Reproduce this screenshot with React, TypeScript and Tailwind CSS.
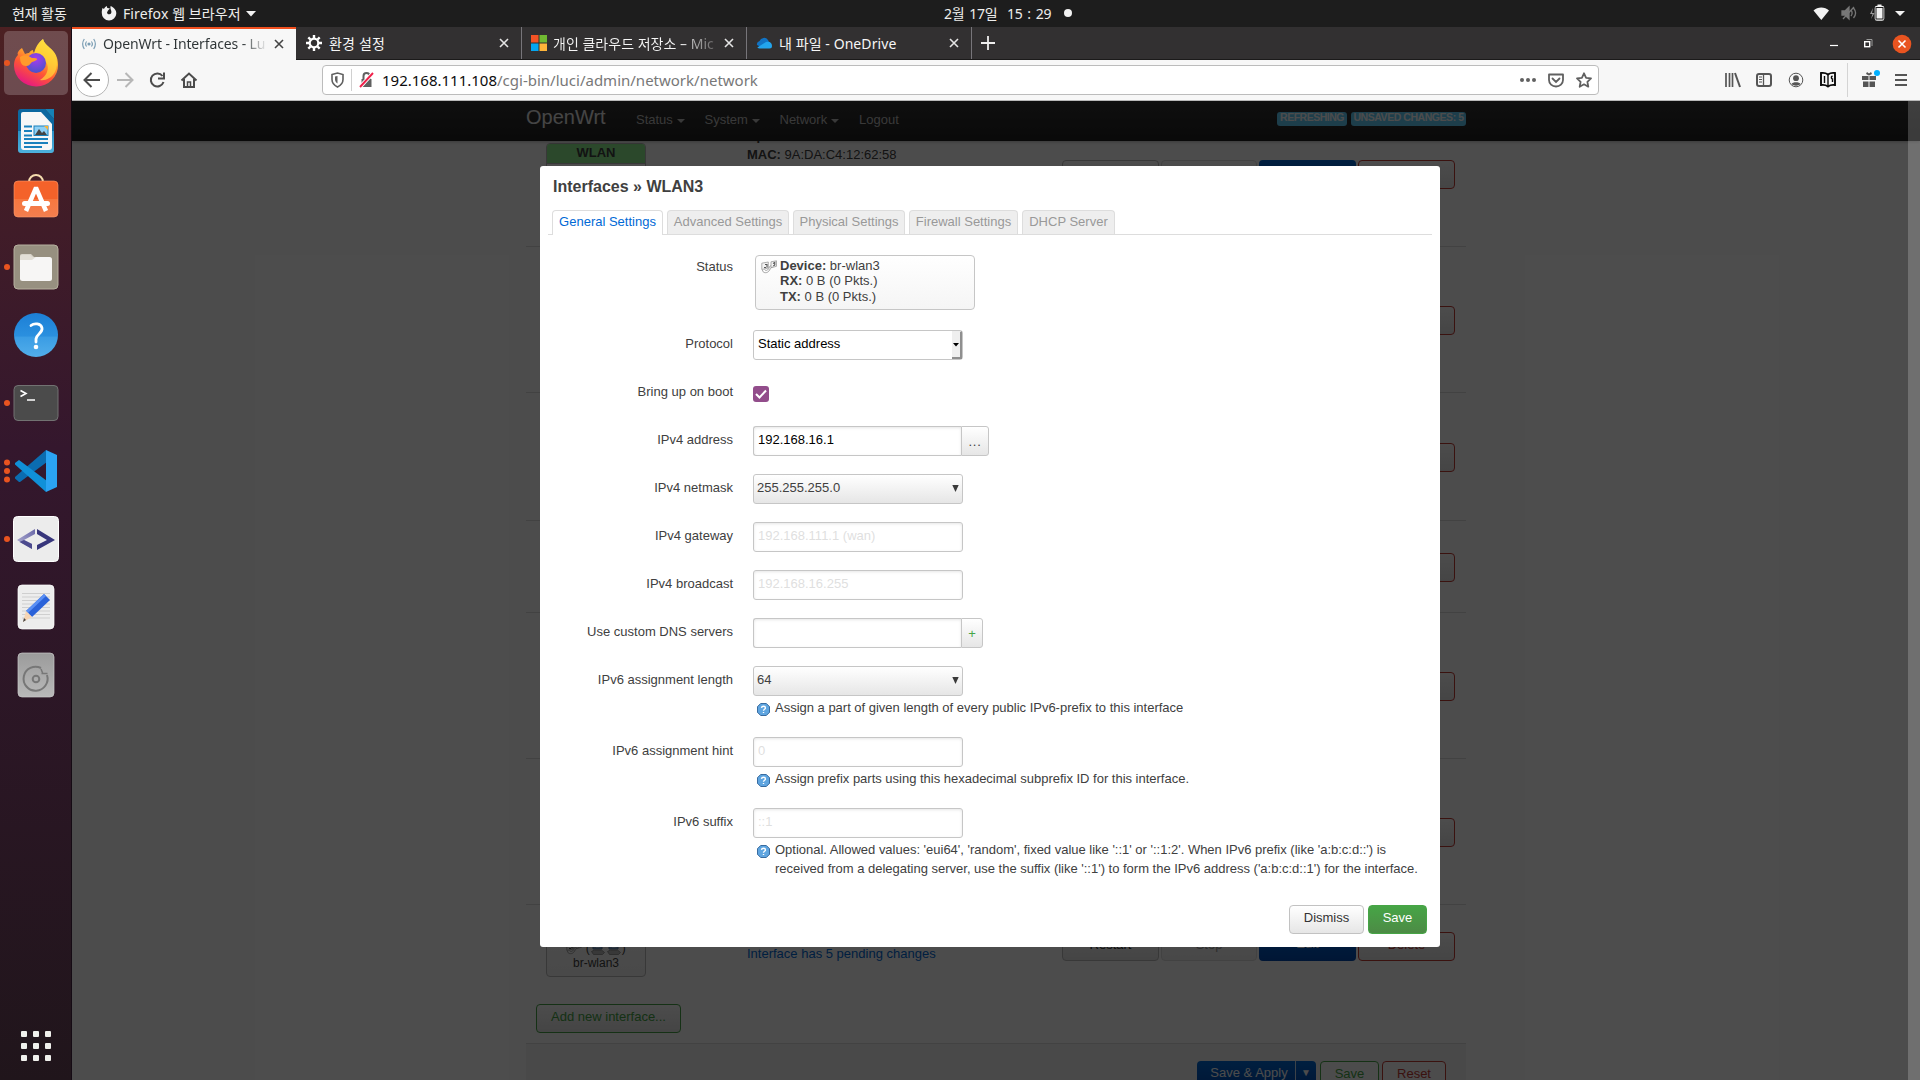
import React from "react";

const UI = "font-['Noto_Sans','Noto_Sans_CJK_KR',sans-serif]";

/* ---------- dock ---------- */

const DockCell = ({ children, dots = 0, active = false }: { children: React.ReactNode; dots?: number; active?: boolean }) => (
  <svg className="block h-[68px] w-[72px] shrink-0" viewBox="0 0 72 68">
    {active && <rect x="4" y="2" width="64" height="64" rx="5" fill="#fff" fillOpacity=".2" />}
    {dots === 1 && <circle cx="7" cy="34" r="3" fill="#e95420" />}
    {dots === 3 && [25.5, 34, 42.5].map((y) => <circle key={y} cx="7" cy={y} r="3" fill="#e95420" />)}
    {children}
  </svg>
);

const Dock = () => (
  <aside className="flex w-[72px] shrink-0 flex-col border-r border-[#150b14] bg-linear-to-b from-[#4c2022] via-[#34172d] via-40% to-[#20151b] pt-[2px]">
    <svg width="0" height="0" className="absolute">
      <defs>
        <linearGradient id="fx" x1=".8" y1="0" x2=".3" y2="1">
          <stop offset="0" stopColor="#fff44f" />
          <stop offset=".35" stopColor="#ffb32b" />
          <stop offset=".65" stopColor="#ff5634" />
          <stop offset="1" stopColor="#e31587" />
        </linearGradient>
        <radialGradient id="fxg" cx=".5" cy=".3" r=".7">
          <stop offset="0" stopColor="#a63bf0" />
          <stop offset="1" stopColor="#4a53c8" />
        </radialGradient>
        <linearGradient id="wr" x1="0" y1="0" x2="0" y2="1">
          <stop offset=".5" stopColor="#0c68a0" />
          <stop offset=".5" stopColor="#2b92c8" />
          <stop offset="1" stopColor="#4db1dd" />
        </linearGradient>
        <linearGradient id="sw" x1="0" y1="0" x2="0" y2="1">
          <stop offset=".5" stopColor="#f4622a" />
          <stop offset=".5" stopColor="#f6773f" />
          <stop offset="1" stopColor="#f37e4f" />
        </linearGradient>
        <linearGradient id="hp" x1="0" y1="0" x2="0" y2="1">
          <stop offset="0" stopColor="#1c7fd6" />
          <stop offset=".53" stopColor="#2b90df" />
          <stop offset=".54" stopColor="#3a9ce4" />
          <stop offset="1" stopColor="#52aeea" />
        </linearGradient>
        <linearGradient id="dk" x1="0" y1="0" x2="0" y2="1">
          <stop offset="0" stopColor="#9b9b9b" />
          <stop offset="1" stopColor="#b9b9b9" />
        </linearGradient>
        <linearGradient id="cd" x1="0" y1="1" x2="1" y2="0">
          <stop offset=".2" stopColor="#a5a4cc" />
          <stop offset="1" stopColor="#6967a8" />
        </linearGradient>
      </defs>
    </svg>

    <DockCell dots={1} active>
      <path d="M22 19l3 6c2-1 3-1 4-1 1-2 3-3 4-3 0 0 0 2 1 3 2-7 5-11 9-14 1 4 4 6 7 9 5 4 8 9 8 17a22 21 0 0 1-44 1c0-6 2-9 4-11-1-2 0-4 4-7z" fill="url(#fx)" />
      <path d="M43 10c1 4 4 6 7 9 7 6 9 15 5 24-3 6-10 9-15 8 7-4 10-12 6-18-4-5-10-6-12-8 2-7 5-12 9-15z" fill="#ffd83a" fillOpacity=".7" />
      <circle cx="36" cy="34" r="10" fill="url(#fxg)" />
      <path d="M20 28c4-3 8-2 12 1 2 0 5 0 5 1 0 2-4 2-6 4-1 1-2 3-5 3-4 0-6-3-6-9z" fill="#ff9a2b" />
    </DockCell>

    <DockCell>
      <path d="M21 12h24l9 10v31a3 3 0 0 1-3 3H21a3 3 0 0 1-3-3V15a3 3 0 0 1 3-3z" fill="url(#wr)" />
      <path d="M45 12h9v10z" fill="#1682b6" />
      <path d="M23 15h18l11 12v23a3 3 0 0 1-3 3H24a3 3 0 0 1-3-3V17a2 2 0 0 1 2-2z" fill="#f7f7f7" />
      <path d="M24 29.500h8M24 34h8M24 38.500h8M24 42h24M24 46h24M24 50h18" stroke="#1a81bd" strokeWidth="2" />
      <rect x="34" y="29" width="14" height="9.500" fill="#8ed0f5" stroke="#1a81bd" />
      <path d="M35 38l4-6 3 4 2-2 3 4z" fill="#444" />
      <path d="M44 29h4v4z" fill="#f9b233" />
    </DockCell>

    <DockCell>
      <path d="M29 19v-2a7 7 0 0 1 14 0v2" fill="none" stroke="#f5dcae" strokeWidth="2" />
      <rect x="14" y="16" width="44" height="36" rx="4" fill="url(#sw)" stroke="#ff9a6b" strokeWidth=".6" />
      <path d="M26 46l9.500-22h1L46 46" fill="none" stroke="#fff" strokeWidth="4.500" />
      <rect x="22" y="36" width="28" height="5" rx="2.500" fill="#fff" />
    </DockCell>

    <DockCell dots={1}>
      <rect x="14" y="12" width="44" height="44" rx="4" fill="#979080" stroke="#b6b09f" />
      <path d="M20 23a2 2 0 0 1 2-2h9l4 4v7H20z" fill="#d9d4c9" />
      <rect x="20" y="24" width="32" height="24" rx="2.500" fill="#f7f6f5" />
      <path d="M20 27h12l4-3h-4l-2-2h-8a2 2 0 0 0-2 2z" fill="#e3dfd6" />
    </DockCell>

    <DockCell>
      <circle cx="36" cy="34" r="22" fill="url(#hp)" />
      <path d="M31 24.500c3-2.500 10-2.500 11 2.500 1 5-5.500 6-6 11v3" fill="none" stroke="#fff" strokeWidth="2.800" strokeLinecap="round" />
      <circle cx="36" cy="46" r="2.300" fill="#fff" />
    </DockCell>

    <DockCell dots={1}>
      <rect x="14" y="16.500" width="44" height="35" rx="4" fill="#4b4b4b" stroke="#727272" />
      <path d="M20.500 21.500l5.500 3-5.500 3M27 31h8" fill="none" stroke="#fff" strokeWidth="1.600" />
    </DockCell>

    <DockCell dots={3}>
      <path d="M19 45l-4-3.500V40l31-27 1 12-27 20z" fill="#0b6cb0" />
      <path d="M15 27.500V26l4-3 28 21-1 11z" fill="#1090d8" />
      <path d="M46 13l11 5v32l-11 5z" fill="#2ba3f2" />
    </DockCell>

    <DockCell dots={1}>
      <rect x="13.500" y="11.500" width="45" height="45" rx="4" fill="#ececec" stroke="#fff" />
      <path d="M35 24v5l-11 6 8 4v5L17 35z" fill="url(#cd)" />
      <path d="M24 35l8 4v5L19.500 37z" fill="#4c4a8e" />
      <path d="M37 24l18 11-18 10v-5l10-5-10-6z" fill="#38367c" />
    </DockCell>

    <DockCell>
      <rect x="18" y="12" width="36" height="44" rx="4" fill="#ededed" stroke="#fff" strokeWidth=".7" />
      <path d="M22 20.500h28M22 24h28M22 27.500h28M22 31h28M22 34.500h28M22 38h28M22 41.500h28M22 45h28" stroke="#cfcfcf" />
      <path d="M44 21l6 6-18 17-6-6z" fill="#2a62d9" />
      <path d="M44 21l2 2-18 17-2-2z" fill="#5a90f5" />
      <path d="M26 38l6 6-9 5z" fill="#f6d5b4" />
      <path d="M24 45l2 2-3 2z" fill="#444" />
    </DockCell>

    <DockCell>
      <rect x="18" y="12" width="36" height="44" rx="4" fill="url(#dk)" stroke="#c8c8c8" strokeWidth=".7" />
      <path d="M41 27a12 12 0 1 0 6 7" fill="none" stroke="#777" strokeWidth="2" />
      <path d="M41 28l2 5M41.500 32.500l6 0" fill="none" stroke="#777" strokeWidth="1.500" />
      <circle cx="36" cy="38" r="3.300" fill="none" stroke="#777" strokeWidth="2" />
    </DockCell>

    <div className="mt-auto mb-[19px] ml-[21px] grid w-[30px] grid-cols-3 gap-[6px]">
      {Array.from({ length: 9 }, (_, i) => (
        <span key={i} className="size-[6px] rounded-[1px] bg-[#f0f0ec]" />
      ))}
    </div>
  </aside>
);

/* ---------- desktop bar ---------- */

const TopBar = () => (
  <header className={`grid h-[27px] shrink-0 grid-cols-3 items-center bg-[#1d1d1d] text-[14px] text-[#eeeeec] ${UI}`}>
    <div className="flex items-center pl-[12px]">
      <span className="w-[89px] text-[14px] tracking-[-0.1px]">현재 활동</span>
      <svg width="16" height="16" viewBox="0 0 16 16" className="-mt-[2px] mr-[6px]">
        <path d="M1.500 3l1.500 1c.6-1.500 1.500-2.300 3-3-.3 1 0 1.600.6 2.100L9 3.500 7 5.500 6 7.500c.3 1.400 1.300 2 2.400 1.800C10 9 10.700 7.800 10.300 6 10 4.600 9 3.600 9.600 1c3 1.300 5.900 3.900 5.700 7.700A7.300 7.300 0 0 1 8 15.500 7.300 7.300 0 0 1 .8 8C.7 6 1.200 4.300 1.500 3z" fill="#f2f2f2" />
      </svg>
      <span className="text-[14px] tracking-[0.1px]">Firefox 웹 브라우저</span>
      <svg width="10" height="6" viewBox="0 0 10 6" className="ml-[5px]"><path d="M0 0h10L5 5.500z" fill="#f2f2f2" /></svg>
    </div>
    <div className="flex items-center pl-[304px]">
      <span className="tracking-[-0.2px] whitespace-pre [word-spacing:1.3px]">2월 17일  15 : 29</span>
      <span className="-mt-[2px] ml-[13px] size-[8px] rounded-full bg-[#f2f2f2]" />
    </div>
    <div className="flex items-center justify-end pr-[14px]">
      <svg width="100" height="20" viewBox="0 0 100 20" className="-mt-px">
        <path d="M7.500 9.500c4-4 11.500-4 15.500 0L15.300 19z" transform="translate(0 -2)" fill="#f2f2f2" />
        <g fill="none" stroke="#777" strokeWidth="1.300">
          <path d="M36 8h3l4-4v12l-4-4h-3z" fill="#777" />
          <path d="M45 7c1.500 2 1.500 4 0 6M47.500 5c2.500 3 2.500 7 0 10M37 16L48 4" />
        </g>
        <path d="M67 5l-3 6h2.500L65 16l3.500-6H66z" fill="#999" />
        <rect x="70" y="4" width="7" height="12.500" rx="1" fill="#f2f2f2" stroke="#f2f2f2" strokeWidth="2.600" />
        <rect x="70" y="4.500" width="7" height="11.500" fill="none" stroke="#1d1d1d" />
        <path d="M71.500 1.500h4v2h-4z" fill="#f2f2f2" />
        <path d="M89 8h10l-5 5z" fill="#f2f2f2" />
      </svg>
    </div>
  </header>
);

/* ---------- browser ---------- */

const CloseX = ({ dark = false }: { dark?: boolean }) => (
  <svg width="10" height="10" viewBox="0 0 10 10" className="shrink-0">
    <path d="M1 1l8 8M9 1l-8 8" stroke={dark ? "#444" : "#e4e4e4"} strokeWidth="1.600" fill="none" />
  </svg>
);

const TabStrip = () => (
  <div className={`flex h-[33px] shrink-0 border-b border-[#1b1a1a] bg-[#323031] text-[14px] text-[#f6f6f6] ${UI}`}>
    <div className="flex h-[33px] w-[224px] items-center border-t-2 border-[#f1501f] bg-[#f7f7f7] pr-[12px] pb-[2px] pl-[10px] text-[#2e3436]">
      <svg width="14" height="12" viewBox="0 0 14 12" className="mr-[7px] shrink-0" fill="none" stroke="#7d9fb5" strokeWidth="1.200">
        <circle cx="7" cy="6" r="1" fill="#4a7693" />
        <path d="M4.600 3.500c-1.200 1.500-1.200 3.500 0 5M9.400 3.500c1.200 1.500 1.200 3.500 0 5M2.300 1c-2 3-2 7 0 10M11.700 1c2 3 2 7 0 10" />
      </svg>
      <span className="w-[165px] shrink-0 bg-linear-to-r from-[#2e3436] from-84% to-transparent to-100% bg-clip-text text-[14px] tracking-[-0.13px] whitespace-nowrap text-transparent">
        OpenWrt - Interfaces - Lu
      </span>
      <span className="ml-auto flex"><CloseX dark /></span>
    </div>
    <div className="flex w-[226px] items-center border-r border-[#77757a] pr-[12px] pl-[10px]">
      <svg width="16" height="16" viewBox="0 0 16 16" className="mr-[7px] shrink-0">
        <g stroke="#fff" strokeWidth="2.400">
          <path d="M8 0v3M8 13v3M0 8h3M13 8h3M2.300 2.300l2.200 2.200M11.500 11.500l2.200 2.200M13.700 2.300l-2.200 2.200M4.500 11.500l-2.200 2.200" />
          <circle cx="8" cy="8" r="4.300" fill="none" strokeWidth="2.200" />
        </g>
      </svg>
      <span className="flex-1 tracking-[0.2px]">환경 설정</span>
      <CloseX />
    </div>
    <div className="flex w-[225px] items-center border-r border-[#77757a] pr-[12px] pl-[9px]">
      <svg width="16" height="16" viewBox="0 0 16 16" className="mr-[6px] shrink-0">
        <path d="M0 0h7.500v7.500H0z" fill="#f35325" /><path d="M8.500 0H16v7.500H8.500z" fill="#70b932" />
        <path d="M0 8.500h7.500V16H0z" fill="#05a6f0" /><path d="M8.500 8.500H16V16H8.500z" fill="#ffb53a" />
      </svg>
      <span className="w-[166px] shrink-0 bg-linear-to-r from-[#f6f6f6] from-75% to-transparent to-105% bg-clip-text tracking-[0.02px] whitespace-nowrap text-transparent">
        개인 클라우드 저장소 – Mic
      </span>
      <span className="ml-auto flex"><CloseX /></span>
    </div>
    <div className="flex w-[225px] items-center border-r border-[#77757a] pr-[12px] pl-[9px]">
      <svg width="16" height="12" viewBox="0 0 16 12" className="mr-[7px] shrink-0">
        <path d="M1 8a3.500 3.500 0 0 1 2.500-4A4.800 4.800 0 0 1 12 3l3 6-8 2z" fill="#1173c4" />
        <path d="M2 10l8-5c4-1 6 1 6 4a2.500 2.500 0 0 1-2.500 2.500H3.500C1.500 11.500 1 10.500 2 10z" fill="#22a5ee" />
      </svg>
      <span className="flex-1 tracking-[0.08px]">내 파일 - OneDrive</span>
      <CloseX />
    </div>
    <div className="flex w-[32px] items-center justify-center">
      <svg width="14" height="14" viewBox="0 0 14 14"><path d="M7 0v14M0 7h14" stroke="#eee" strokeWidth="1.800" /></svg>
    </div>
    <div className="flex flex-1 items-center justify-end pr-[8px]">
      <svg width="92" height="22" viewBox="0 0 92 22">
        <path d="M10 13.500h8" stroke="#fff" strokeWidth="1.200" />
        <path d="M46.500 7.500h5.500V14" stroke="#999" fill="none" />
        <rect x="44.700" y="9.700" width="5" height="5" fill="none" stroke="#fff" strokeWidth="1.400" />
        <circle cx="82" cy="12" r="9.300" fill="#e95420" />
        <path d="M78.500 8.500l7 7M85.500 8.500l-7 7" stroke="#fff" strokeWidth="1.600" />
      </svg>
    </div>
  </div>
);

const Toolbar = () => (
  <div className={`flex h-[41px] shrink-0 items-center border-b border-[#b9b9b9] bg-[#f7f7f7] ${UI}`}>
    <svg width="250" height="40" viewBox="0 0 250 40" className="shrink-0" fill="none" stroke="#4c4c4c" strokeWidth="2">
      <circle cx="20" cy="20" r="16.500" fill="#fff" stroke="#b4b4b4" strokeWidth="1" />
      <path d="M28 20H13M19.500 13l-7 7 7 7" />
      <path d="M45 20h15M53.500 13l7 7-7 7" stroke="#b7b7b7" />
      <path d="M90.500 16a6.500 6.500 0 1 0 1 6" />
      <path d="M92 12.500v6h-6" />
      <path d="M109.500 20.500l7.500-7 7.500 7M112 19v8h10v-8" />
      <path d="M115.500 22h3v5h-3z" strokeWidth="1.500" />
    </svg>
    <div className="flex h-[30px] w-[1277px] items-center rounded-[4px] border border-[#bcbcbc] bg-white">
      <svg width="59" height="28" viewBox="0 0 59 28" className="shrink-0" fill="none">
        <path d="M9 8.500l5.500-1.500 5.500 1.500v5c0 3.500-2.500 6-5.500 7.500-3-1.500-5.500-4-5.500-7.500z" stroke="#606060" strokeWidth="1.600" />
        <path d="M14.500 10v7.500c-1.500-1-2.500-2.500-2.500-4v-3z" fill="#606060" />
        <path d="M28.500 3v22" stroke="#d0d0d0" />
        <path d="M38.500 13h10v8h-10z" fill="#606060" />
        <path d="M40.500 13v-3a3 3 0 0 1 6 0v3" stroke="#606060" strokeWidth="2" />
        <path d="M37 21L50 7" stroke="#fff" strokeWidth="4" />
        <path d="M37 21L50 7" stroke="#f0204a" strokeWidth="1.900" />
      </svg>
      <span className="flex-1 text-[15px] text-[#787878]">
        <span className="text-[#0c0c0d]">192.168.111.108</span>/cgi-bin/luci/admin/network/network
      </span>
      <svg width="80" height="28" viewBox="0 0 80 28" fill="none" stroke="#606060" strokeWidth="1.800">
        <g fill="#606060" stroke="none"><circle cx="4" cy="14" r="2" /><circle cx="10" cy="14" r="2" /><circle cx="16" cy="14" r="2" /></g>
        <path d="M31 8.500h14v5.500a7 6.500 0 0 1-14 0z" strokeLinejoin="round" />
        <path d="M34.500 12.500l3.500 3.500 3.500-3.500" strokeLinecap="round" />
        <path d="M66 7.300l2.100 4.500 4.900.6-3.600 3.400.9 4.900-4.300-2.400-4.300 2.400.9-4.900-3.600-3.400 4.900-.6z" strokeLinejoin="round" />
      </svg>
    </div>
    <div className="flex-1" />
    <svg width="203" height="40" viewBox="0 0 203 40" fill="none" stroke="#555" strokeWidth="2">
      <path d="M9 13v14M12.500 13v14M15.500 13v14" strokeWidth="1.700" />
      <path d="M18 13l5 14" />
      <rect x="40" y="14" width="14" height="12" rx="2" strokeWidth="2" />
      <path d="M46.500 14v12" strokeWidth="1.300" /><path d="M42 17h3M42 19.500h3M42 22h3" strokeWidth="1" />
      <circle cx="79" cy="20" r="6.800" strokeWidth="1" />
      <circle cx="79" cy="18.200" r="2.900" fill="#555" stroke="none" />
      <path d="M74.500 24c1-2.500 8-2.500 9 0-2.500 2.200-6.500 2.200-9 0z" fill="#555" stroke="none" />
      <path d="M104 13c3-.5 5 0 7 1.500 2-1.500 4-2 7-1.500v12c-3-.5-5 0-7 1.500-2-1.500-4-2-7-1.500z" stroke="#0a0a0a" strokeWidth="1.900" />
      <path d="M111 14v12M107.500 16v7M115.500 16c-2 1-1 3 0 3v3" stroke="#0a0a0a" strokeWidth="1.400" />
      <path d="M130.500 3v34" stroke="#d4d4d4" strokeWidth="1" />
      <path d="M145 16h6.500v4H145zM152.500 16h6.500v4h-6.500zM146 21.500h5.500V27H146zM152.500 21.500h5.500V27h-5.500zM150 12l2 1.500 2-1.500 1 2-3 1.500-3-1.500z" fill="#555" stroke="none" />
      <circle cx="160" cy="13" r="3" fill="#00b0ff" stroke="none" />
      <path d="M178 15h12M178 20h12M178 25h12" strokeWidth="1.900" />
    </svg>
  </div>
);

/* ---------- LuCI page under the overlay ---------- */

const Caret = () => <span className="mt-[2px] ml-[4px] inline-block h-0 w-0 border-x-4 border-t-4 border-x-transparent border-t-[#bfbfbf]" />;

const LuciNav = () => (
  <nav className="z-0 flex h-[40px] shrink-0 bg-linear-to-b from-[#333] to-[#222] shadow-[0_1px_3px_rgba(0,0,0,0.25),inset_0_-1px_0_rgba(0,0,0,0.1)]">
    <div className="mx-auto flex w-[940px] items-center text-[13px] text-[#bfbfbf]">
      <span className="-mt-[8px] w-[110px] text-[20px] leading-[20px] text-[#e8e8e8]">OpenWrt</span>
      <span className="-mt-[3px] flex w-[68.5px] items-center">Status<Caret /></span>
      <span className="-mt-[3px] flex w-[75px] items-center">System<Caret /></span>
      <span className="-mt-[3px] flex w-[79.5px] items-center">Network<Caret /></span>
      <span className="-mt-[3px] flex-1">Logout</span>
      <span className="-mt-[4px] mr-[4px] h-[14px] w-[70px] rounded-[3px] bg-[#62cffc] text-center text-[10.5px] leading-[11px] font-bold tracking-[-0.5px] text-white">REFRESHING</span>
      <span className="-mt-[4px] h-[14px] w-[115px] rounded-[3px] bg-[#62cffc] text-center text-[10.5px] leading-[11px] font-bold tracking-[-0.45px] text-white">UNSAVED CHANGES: 5</span>
    </div>
  </nav>
);

const RowButtons = () => (
  <div className="mt-px mr-[11px] ml-auto grid grid-cols-[97px_96px_97px_97px] gap-[2px] text-center text-[13px] leading-[23px]">
    <span className="h-[29px] rounded-[4px] border border-[#bbb] bg-linear-to-b from-white to-[#e6e6e6] text-[#333]">Restart</span>
    <span className="h-[29px] rounded-[4px] border border-[#ddd] bg-linear-to-b from-white to-[#f0f0f0] text-[#999]">Stop</span>
    <span className="h-[29px] rounded-[4px] bg-linear-to-b from-[#0069d6] to-[#0049b0] text-white">Edit</span>
    <span className="h-[29px] rounded-[4px] border border-[#c43c35] bg-linear-to-b from-white to-[#e6e6e6] text-[#c43c35]">Delete</span>
  </div>
);

const IfaceRow = ({ className, children }: { className: string; children?: React.ReactNode }) => (
  <div className={`flex items-center border-t border-[#ddd] ${className}`}>
    {children}
    <RowButtons />
  </div>
);

const PlugIcon = () => (
  <svg width="16" height="14" viewBox="0 0 16 14" fill="none" stroke="#9a9a9a">
    <path d="M.8 3.200l6.500-1.200v6l-6.500 1.500zM10 1.800l5.500-1v5.500l-5.500 1.500z" fill="#f4f4f4" strokeWidth=".8" />
    <path d="M4 4.500h2v3M3 7.500h2M12 3.500l1.800-1v2.500l-1.500 1" stroke="#555" strokeWidth="1.100" />
    <path d="M1.500 10c0 3 4 3.500 6 1.500s1.500-4 4-4.500M3.500 9.500c1 1.500 3 1 4-.5s1-3 2.500-3.500" strokeWidth=".9" />
  </svg>
);

const WifiPortIcon = () => (
  <svg width="16" height="16" viewBox="0 0 16 16" fill="none">
    <path d="M3 2h9v7H3z" fill="#7fa6cf" stroke="#5a7ca3" />
    <path d="M5 4.500c2-1.500 3.500-1.500 5.500 0M6 7h3.500" stroke="#dfe9f5" />
    <path d="M1.500 11.500l3-1.500h7l3 2.500-2 2h-9z" fill="#bbb" stroke="#888" strokeWidth=".8" />
  </svg>
);

const LuciPage = () => (
  <div className="mx-auto flex w-[940px] flex-1 flex-col text-[13px] text-[#404040]">
    <div className="flex h-[105px] shrink-0 items-start">
      <div className="mt-[2px] ml-[20px] flex h-[64px] w-[100px] flex-col overflow-hidden rounded-[4px] border border-[#bbb] bg-white text-center">
        <span className="h-[20px] border-b border-[#bbb] bg-[#90f090] leading-[17px] font-bold">WLAN</span>
      </div>
      <div className="-mt-[13px] ml-[101px] leading-[19px]">
        <div className="-mt-[2px]"><b>Uptime:</b> 0h 12m 7s</div>
        <div><b>MAC:</b> 9A:DA:C4:12:62:58</div>
      </div>
      <div className="mt-[18px] ml-auto"><RowButtons /></div>
    </div>
    <IfaceRow className="h-[146px] shrink-0" />
    <IfaceRow className="h-[128px] shrink-0" />
    <IfaceRow className="h-[92px] shrink-0" />
    <IfaceRow className="h-[146px] shrink-0" />
    <IfaceRow className="h-[146px] shrink-0" />
    <IfaceRow className="h-[82px] shrink-0">
      <div className="mt-[1px] ml-[20px] flex h-[62px] w-[100px] shrink-0 flex-col items-center justify-end rounded-[4px] border border-[#bbb] bg-linear-to-b from-white to-[#f5f5f5] pb-[5px] text-[12px] leading-[15px]">
        <span className="flex items-center"><PlugIcon />&nbsp;(<WifiPortIcon /><WifiPortIcon />)</span>
        <span>br-wlan3</span>
      </div>
      <span className="mt-[16px] ml-[101px] whitespace-nowrap text-[#0069d6]">Interface has 5 pending changes</span>
    </IfaceRow>
    <div className="h-[57px] shrink-0 pt-[18px] pl-[10px]">
      <div className="h-[29px] w-[145px] rounded-[4px] border border-[#46a546] bg-linear-to-b from-white to-[#e6e6e6] text-center leading-[24px] text-[#46a546]">
        Add new interface...
      </div>
    </div>
    <div className="flex flex-1 items-start justify-end gap-[3px] overflow-hidden border-t border-[#ddd] bg-[#f5f5f5] pt-[17px] pr-[20px] text-center leading-[24px]">
      <div className="mr-[1px] flex h-[29px] rounded-[4px] bg-linear-to-b from-[#0069d6] to-[#0049b0] text-white">
        <span className="w-[99px] border-r border-white/80 pl-[6px]">Save &amp; Apply</span>
        <span className="w-[20px] text-[10px]">▼</span>
      </div>
      <span className="h-[29px] w-[59px] rounded-[4px] border border-[#46a546] bg-white leading-[23px] text-[#46a546]">Save</span>
      <span className="h-[29px] w-[64px] rounded-[4px] border border-[#c43c35] bg-white leading-[23px] text-[#c43c35]">Reset</span>
    </div>
  </div>
);

/* ---------- dialog ---------- */

const Field = ({ label, children, className = "mb-[18px]" }: { label: string; children: React.ReactNode; className?: string }) => (
  <div className={`flex items-start ${className}`}>
    <label className="w-[183px] text-right leading-[28px]">{label}</label>
    <div className="ml-[20px]">{children}</div>
  </div>
);

const Input = ({ value, placeholder, children }: { value?: string; placeholder?: string; children?: React.ReactNode }) => (
  <div className="flex">
    <div className={`h-[30px] rounded-[3px] border border-[#c6c6c6] bg-white pl-[4px] leading-[26px] shadow-[inset_0_1px_3px_rgba(0,0,0,0.1)] ${children ? "w-[208px] rounded-r-none border-r-0" : "w-[210px]"} ${value ? "text-black" : "text-[#dfdfdf]"}`}>
      {value ?? placeholder}
    </div>
    {children}
  </div>
);

const Select = ({ value }: { value: string }) => (
  <div className="flex h-[30px] w-[210px] justify-between rounded-[3px] border border-[#c6c6c6] bg-linear-to-b from-white to-[#e6e6e6] pr-[3px] pl-[3px] leading-[26px]">
    <span>{value}</span>
    <svg width="7" height="7" viewBox="0 0 7 7" className="mt-[10px]"><path d="M.3 0h6.400L3.500 7z" fill="#3a3a3a" /></svg>
  </div>
);

const Hint = ({ children }: { children: React.ReactNode }) => (
  <div className="mt-[2px] flex pl-[4px]">
    <svg width="13" height="13" viewBox="0 0 14 14" className="mt-[5px] mr-[5px] shrink-0">
      <path d="M4 .5h6L13.500 4v6L10 13.500H4L.5 10V4z" fill="#5fa5e0" stroke="#2a5f96" />
      <path d="M4.800 5.300c.3-2.300 4.300-2.300 4.300 0C9.100 6.800 7 6.600 7 8.300M7 9.600v1.300" fill="none" stroke="#fff" strokeWidth="1.500" />
    </svg>
    <div className="leading-[19px] tracking-[-0.01px] whitespace-nowrap">{children}</div>
  </div>
);

const TAB = "h-[24px] rounded-t-[4px] border border-[#ddd] text-center leading-[22px]";

const Dialog = () => (
  <section className="absolute top-[65px] left-[468px] flex h-[781px] w-[900px] flex-col rounded-[3px] bg-white px-[8px] text-[13px] text-[#404040]">
    <h4 className="mt-[12px] pl-[5px] text-[16px] leading-[18px] font-bold">Interfaces » WLAN3</h4>
    <div className="mt-[14px] flex h-[25px] gap-[4px] border-b border-[#ddd] pl-[4px]">
      <span className="h-[25px] w-[111px] rounded-t-[4px] border border-b-0 border-[#ddd] bg-white text-center leading-[22px] text-[#0069d6]">General Settings</span>
      <span className={`${TAB} w-[122px] border-b-0 bg-[#eee] text-[#999]`}>Advanced Settings</span>
      <span className={`${TAB} w-[112px] border-b-0 bg-[#eee] text-[#999]`}>Physical Settings</span>
      <span className={`${TAB} w-[109px] border-b-0 bg-[#eee] text-[#999]`}>Firewall Settings</span>
      <span className={`${TAB} w-[93px] border-b-0 bg-[#eee] text-[#999]`}>DHCP Server</span>
    </div>
    <div className="mt-[18px] pl-[2px]">
      <Field label="Status" className="mb-[20px]">
        <div className="mt-[2px] ml-[2px] flex h-[55px] w-[220px] rounded-[4px] border border-[#c6c6c6] bg-linear-to-b from-white to-[#f5f5f5] pt-[2px] pl-[5px] leading-[15.4px]">
          <span className="mt-[2px] mr-[3px]"><PlugIcon /></span>
          <div>
            <div><b>Device:</b> br-wlan3</div>
            <div><b>RX:</b> 0 B (0 Pkts.)</div>
            <div><b>TX:</b> 0 B (0 Pkts.)</div>
          </div>
        </div>
      </Field>
      <Field label="Protocol">
        <div className="flex h-[30px] w-[210px] justify-between rounded-[3px] border border-[#c6c6c6] bg-white pl-[4px] leading-[25px] text-black">
          <span>Static address</span>
          <span className="flex w-[10px] items-center justify-center border-t border-r-2 border-b-2 border-[#8f8f8f] border-t-[#eee] bg-[#efefef]">
            <svg width="6" height="4" viewBox="0 0 6 4"><path d="M0 0h6L3 3.500z" fill="#000" /></svg>
          </span>
        </div>
      </Field>
      <Field label="Bring up on boot">
        <div className="h-[30px] pt-[8px]">
          <svg width="16" height="16" viewBox="0 0 16 16">
            <rect width="16" height="16" rx="3" fill="#924d8b" />
            <path d="M3 8l3.500 3.500L13 4.500" fill="none" stroke="#fff" strokeWidth="2" />
          </svg>
        </div>
      </Field>
      <Field label="IPv4 address">
        <Input value="192.168.16.1">
          <span className="h-[30px] w-[28px] rounded-r-[3px] border border-[#c6c6c6] bg-linear-to-b from-white to-[#e6e6e6] text-center leading-[29px] tracking-[0.8px]">...</span>
        </Input>
      </Field>
      <Field label="IPv4 netmask"><Select value="255.255.255.0" /></Field>
      <Field label="IPv4 gateway"><Input placeholder="192.168.111.1 (wan)" /></Field>
      <Field label="IPv4 broadcast"><Input placeholder="192.168.16.255" /></Field>
      <Field label="Use custom DNS servers">
        <Input placeholder="">
          <span className="h-[30px] w-[22px] rounded-r-[3px] border border-[#c6c6c6] bg-linear-to-b from-white to-[#e6e6e6] text-center leading-[29px] text-[#46a546]">+</span>
        </Input>
      </Field>
      <Field label="IPv6 assignment length" className="mb-[20px]">
        <Select value="64" />
        <Hint>Assign a part of given length of every public IPv6-prefix to this interface</Hint>
      </Field>
      <Field label="IPv6 assignment hint" className="mb-[20px]">
        <Input placeholder="0" />
        <Hint>Assign prefix parts using this hexadecimal subprefix ID for this interface.</Hint>
      </Field>
      <Field label="IPv6 suffix" className="">
        <Input placeholder="::1" />
        <Hint>
          Optional. Allowed values: 'eui64', 'random', fixed value like '::1' or '::1:2'. When IPv6 prefix (like 'a:b:c:d::') is
          <br />
          received from a delegating server, use the suffix (like '::1') to form the IPv6 address ('a:b:c:d::1') for the interface.
        </Hint>
      </Field>
    </div>
    <div className="mt-auto mb-[13px] flex justify-end gap-[4px] pr-[5px] text-center">
      <button className="flex h-[29px] w-[75px] items-start justify-center rounded-[4px] border border-[#c2c2c2] bg-linear-to-b from-white to-[#e6e6e6] leading-[24px] text-[#333]">Dismiss</button>
      <button className="flex h-[29px] w-[59px] items-start justify-center rounded-[4px] border border-[#46a546] bg-linear-to-b from-[#46a546] to-[#4c8b45] leading-[24px] text-white">Save</button>
    </div>
  </section>
);

export default function App() {
  return (
    <div className="flex h-[1080px] w-[1920px] flex-col overflow-hidden bg-black">
      <TopBar />
      <div className="flex min-h-0 flex-1">
        <Dock />
        <main className="flex min-w-0 flex-1 flex-col">
          <TabStrip />
          <Toolbar />
          <div className="relative flex min-h-0 flex-1 flex-col overflow-hidden bg-white font-['Liberation_Sans',Arial,sans-serif]">
            <div className="isolate flex min-h-0 flex-1 flex-col">
              <div className="z-10 flex flex-col"><LuciNav /></div>
              <LuciPage />
            </div>
            <div className="absolute inset-0 z-20 bg-black/70" />
            <div className="absolute inset-y-0 right-0 z-20 w-[12px] bg-white/20" />
            <div className="absolute inset-0 z-30"><Dialog /></div>
          </div>
        </main>
      </div>
    </div>
  );
}
